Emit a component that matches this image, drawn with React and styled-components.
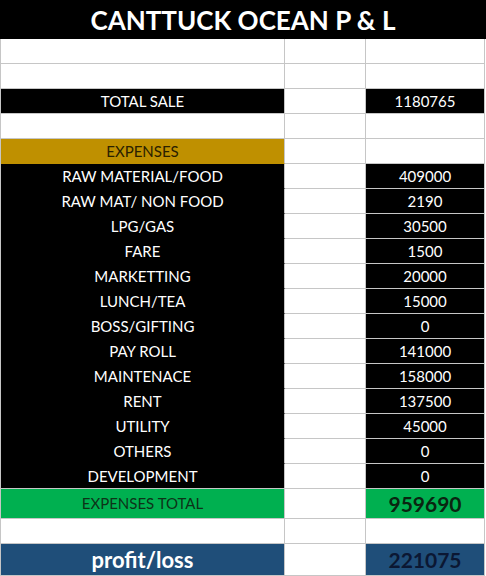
import React from "react";
import styled, { createGlobalStyle } from "styled-components";

const Global = createGlobalStyle`
  html, body { margin: 0; padding: 0; background: #ffffff; }
  body { font-family: Lato, "Open Sans", sans-serif; }
`;

const GRID = "#c6c6c6";

const Page = styled.div`
  width: 486px;
  height: 576px;
  overflow: hidden;
  background: #ffffff;
`;

const Title = styled.h1`
  margin: 0;
  height: 39px;
  background: #000000;
  color: #ffffff;
  font-family: Lato, sans-serif;
  font-weight: 700;
  font-size: 26px;
  display: flex;
  align-items: center;
  justify-content: center;
  letter-spacing: 0;
`;

const Sheet = styled.div`
  width: 485px;
  border-left: 1px solid ${GRID};
  box-sizing: border-box;
`;

const Row = styled.div`
  display: grid;
  grid-template-columns: 284px 81px 119px;
  height: ${(p) => p.$h || 25}px;
`;

const Cell = styled.div`
  box-sizing: border-box;
  border-right: 1px solid ${GRID};
  border-bottom: 1px solid ${(p) => p.$bottom || GRID};
  background: ${(p) => p.$bg || "#ffffff"};
  color: ${(p) => p.$fg || "#ffffff"};
  font-size: ${(p) => p.$size || 15}px;
  font-weight: ${(p) => (p.$bold ? 700 : 400)};
  display: flex;
  align-items: center;
  justify-content: center;
  white-space: nowrap;
  padding-bottom: 1px;
`;

const expenses = [
  ["RAW MATERIAL/FOOD", "409000"],
  ["RAW MAT/ NON FOOD", "2190"],
  ["LPG/GAS", "30500"],
  ["FARE", "1500"],
  ["MARKETTING", "20000"],
  ["LUNCH/TEA", "15000"],
  ["BOSS/GIFTING", "0"],
  ["PAY ROLL", "141000"],
  ["MAINTENACE", "158000"],
  ["RENT", "137500"],
  ["UTILITY", "45000"],
  ["OTHERS", "0"],
  ["DEVELOPMENT", "0"],
];

const BlankRow = () => (
  <Row>
    <Cell />
    <Cell />
    <Cell />
  </Row>
);

export default function App() {
  return (
    <Page>
      <Global />
      <Title>CANTTUCK OCEAN P &amp; L</Title>
      <Sheet>
        <BlankRow />
        <BlankRow />
        <Row>
          <Cell $bg="#000000">TOTAL SALE</Cell>
          <Cell />
          <Cell $bg="#000000">1180765</Cell>
        </Row>
        <BlankRow />
        <Row>
          <Cell $bg="#bf9000" $fg="#2a2100" $bottom="#bf9000">EXPENSES</Cell>
          <Cell />
          <Cell />
        </Row>
        {expenses.map(([label, value], i) => (
          <Row key={label}>
            <Cell $bg="#000000" $bottom={i === expenses.length - 1 ? GRID : "#000000"}>
              {label}
            </Cell>
            <Cell />
            <Cell $bg="#000000">{value}</Cell>
          </Row>
        ))}
        <Row $h={30}>
          <Cell $bg="#00b050" $fg="#0d3318">EXPENSES TOTAL</Cell>
          <Cell />
          <Cell $bg="#00b050" $fg="#0a2410" $bold $size={21}>959690</Cell>
        </Row>
        <BlankRow />
        <Row $h={32}>
          <Cell $bg="#1f4e79" $fg="#ffffff" $bold $size={22}>profit/loss</Cell>
          <Cell />
          <Cell $bg="#1f4e79" $fg="#0b1733" $bold $size={21}>221075</Cell>
        </Row>
      </Sheet>
    </Page>
  );
}
